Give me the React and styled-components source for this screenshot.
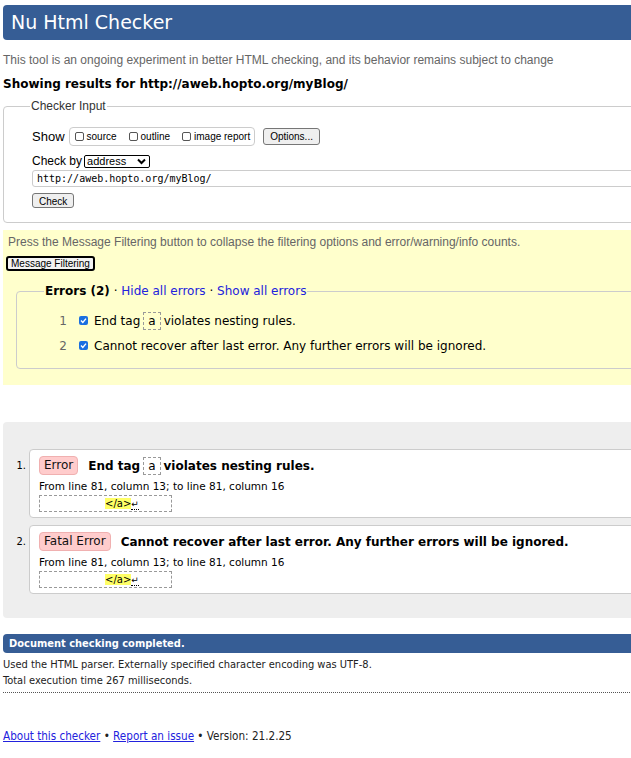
import React from "react";
import styled, { createGlobalStyle } from "styled-components";

const Global = createGlobalStyle`
  html, body { margin: 0; padding: 0; overflow: hidden; background: #fff; }
  body { font-family: "DejaVu Sans", sans-serif; color: #000; }
`;

const Page = styled.div`
  width: 720px;
  padding: 5px 0 0 3px;
  box-sizing: border-box;
`;

const Header = styled.h1`
  margin: 0;
  height: 35px;
  background: #365d95;
  color: #fff;
  border-radius: 4px;
  padding-left: 8px;
  font: 400 19px/35px "DejaVu Sans", sans-serif;
`;

const Intro = styled.p`
  margin: 12px 0 0;
  font: 12px/16px "Liberation Sans", Arial, sans-serif;
  color: #666;
`;

const ResultsFor = styled.h2`
  margin: 8px 0 0;
  font: 700 12px/16px "DejaVu Sans", sans-serif;
`;

const InputSet = styled.fieldset`
  margin: 7px 0 0;
  padding: 0 0 14px 28px;
  border: 1px solid #ccc;
  border-radius: 4px;
`;

const InputLegend = styled.legend`
  padding: 0 1px;
  margin-left: -2px;
  font: 12px/14px "Liberation Sans", Arial, sans-serif;
  color: #333;
`;

const Row = styled.div`
  display: flex;
  align-items: center;
  margin-top: ${(p) => p.$mt}px;
`;

const ShowLabel = styled.span`
  font: 13px/19px "Liberation Sans", Arial, sans-serif;
  margin-right: 4px;
`;

const OptionGroup = styled.span`
  display: inline-flex;
  align-items: center;
  height: 17px;
  border: 1px solid #ccc;
  border-radius: 4px;
  padding: 0 4px 0 5px;
  gap: 12px;
`;

const Opt = styled.label`
  display: inline-flex;
  align-items: center;
  gap: 3px;
  font: 10px/12px "Liberation Sans", Arial, sans-serif;
`;

const SmallBox = styled.span`
  width: 7px;
  height: 7px;
  border: 1px solid #555;
  border-radius: 2px;
  background: #fff;
`;

const NativeButton = styled.button`
  font: 10px/13px "Liberation Sans", Arial, sans-serif;
  color: #000;
  background: #efefef;
  border: 1px solid #767676;
  border-radius: 3px;
  padding: 1px 6px;
  height: ${(p) => p.$h}px;
  margin-left: ${(p) => p.$ml || 0}px;
`;

const CheckByLabel = styled.span`
  font: 12px/14px "Liberation Sans", Arial, sans-serif;
  margin-right: 2px;
`;

const SelectWrap = styled.span`
  position: relative;
  display: block;
  width: 66px;
  height: 13px;
`;

const Select = styled.select`
  display: block;
  appearance: none;
  width: 66px;
  height: 13px;
  box-sizing: border-box;
  border: 1px solid #000;
  border-radius: 2px;
  background: #fff;
  padding: 0 0 0 2px;
  margin: 0;
  font: 11px/11px "Liberation Sans", Arial, sans-serif;
  color: #000;
`;

const Chevron = styled.svg`
  position: absolute;
  right: 4px;
  top: 3px;
  pointer-events: none;
`;

const UrlInput = styled.input`
  display: block;
  margin-top: 2px;
  width: 100%;
  height: 17px;
  box-sizing: border-box;
  border: 1px solid #ccc;
  border-radius: 3px;
  padding: 0 4px;
  font: 10px/15px "DejaVu Sans Mono", monospace;
  color: #000;
`;

const Filters = styled.div`
  margin-top: 7px;
  background: #ffc;
  padding: 4px 0 16px 5px;
`;

const FilterNote = styled.p`
  margin: 0;
  font: 12px/16px "Liberation Sans", Arial, sans-serif;
  color: #666;
`;

const FilterButton = styled.button`
  display: block;
  margin: 6px 0 0 -2px;
  height: 15px;
  padding: 0 3px;
  border: 2px solid #000;
  border-radius: 3px;
  background: #f3f3f3;
  font: 10px/11px "Liberation Sans Narrow", "Liberation Sans", Arial, sans-serif;
  color: #000;
`;

const ErrorSet = styled.fieldset`
  margin: 12px 0 0 8px;
  padding: 9px 0 10px 0;
  border: 1px solid #ccc;
  border-radius: 4px;
`;

const ErrorLegend = styled.legend`
  margin-left: 27px;
  padding: 0 1px;
  font: 12px/16px "DejaVu Sans", sans-serif;
  color: #000;
  b { font-weight: 700; }
  a { color: #22d; text-decoration: none; }
`;

const FilterList = styled.ol`
  margin: 0;
  padding: 0;
  list-style: none;
`;

const FilterItem = styled.li`
  display: flex;
  align-items: center;
  height: 25px;
  font: 12px/16px "DejaVu Sans", sans-serif;
`;

const ItemNum = styled.span`
  width: 50px;
  text-align: right;
  color: #666;
  margin-right: 12px;
`;

const Tick = styled.span`
  width: 9px;
  height: 9px;
  border-radius: 2px;
  background: #1a6fe0;
  margin-right: 6px;
  display: inline-flex;
  align-items: center;
  justify-content: center;
`;

const Code = styled.code`
  display: inline-block;
  border: 1px dashed #999;
  padding: 0 4px;
  margin: 0 3px;
  font: 400 12px/16px "DejaVu Sans", sans-serif;
`;

const Results = styled.div`
  margin-top: 37px;
  background: #eee;
  border-radius: 4px;
  padding: 27px 0 24px 0;
`;

const ResultList = styled.ol`
  margin: 0;
  padding: 0 0 0 26px;
  display: flex;
  flex-direction: column;
  gap: 7px;
`;

const ResultItem = styled.li`
  background: #fff;
  border: 1px solid #ccc;
  border-radius: 4px;
  padding: 6px 0 5px 9px;
  font: 12px/16px "DejaVu Sans", sans-serif;
  &::marker {
    font: 11px "DejaVu Sans Condensed", "DejaVu Sans", sans-serif;
  }
`;

const Heading = styled.p`
  margin: 0;
  display: flex;
  align-items: center;
  font-weight: 700;
`;

const Badge = styled.span`
  display: inline-block;
  background: #fcc;
  border: 1px solid #f0b0b0;
  border-radius: 4px;
  padding: 0 4px;
  height: 17px;
  line-height: 17px;
  font-weight: 400;
  color: #111;
  margin-right: 10px;
`;

const Location = styled.p`
  margin: 3px 0 0;
  font: 10.5px/16px "DejaVu Sans", sans-serif;
`;

const Extract = styled.p`
  margin: 1px 0 0;
  width: 133px;
  height: 17px;
  box-sizing: border-box;
  border: 1px dashed #999;
  padding-left: 65px;
  font: 10px/15px "DejaVu Sans", sans-serif;
  white-space: nowrap;
  mark { background: #ff6; color: #000; }
`;

const Lf = styled.span`
  border-bottom: 1px dotted #000;
  font-size: 9px;
`;

const Done = styled.div`
  margin-top: 16px;
  height: 19px;
  background: #365d95;
  color: #fff;
  border-radius: 4px;
  padding-left: 6px;
  font: 700 11px/19px "DejaVu Sans Condensed", "DejaVu Sans", sans-serif;
`;

const Stats = styled.div`
  font: 11px/16px "DejaVu Sans Condensed", "DejaVu Sans", sans-serif;
  color: #222;
  padding-bottom: 3px;
  border-bottom: 1px dotted #555;
  margin-top: 4px;
`;

const Footer = styled.p`
  margin: 35px 0 0;
  font: 11.6px/16px "DejaVu Sans Condensed", "DejaVu Sans", sans-serif;
  color: #222;
  a { color: #22d; text-decoration: underline; }
`;

const CheckMark = () => (
  <svg width="7" height="7" viewBox="0 0 7 7">
    <path d="M1 3.6 L2.8 5.4 L6 1.6" fill="none" stroke="#fff" strokeWidth="1.4" />
  </svg>
);

const CodeExtract = () => (
  <Extract>
    <mark>&lt;/a&gt;</mark>
    <Lf>↵</Lf>
  </Extract>
);

export default function App() {
  return (
    <>
      <Global />
      <Page>
        <Header>Nu Html Checker</Header>
        <Intro>
          This tool is an ongoing experiment in better HTML checking, and its behavior remains subject to change
        </Intro>
        <ResultsFor>Showing results for http://aweb.hopto.org/myBlog/</ResultsFor>

        <InputSet>
          <InputLegend>Checker Input</InputLegend>
          <Row $mt={14}>
            <ShowLabel>Show</ShowLabel>
            <OptionGroup>
              <Opt><SmallBox />source</Opt>
              <Opt><SmallBox />outline</Opt>
              <Opt><SmallBox />image report</Opt>
            </OptionGroup>
            <NativeButton $h={17} $ml={8}>Options...</NativeButton>
          </Row>
          <Row $mt={8}>
            <CheckByLabel>Check by</CheckByLabel>
            <SelectWrap>
              <Select defaultValue="address">
                <option value="address">address</option>
              </Select>
              <Chevron width="9" height="7" viewBox="0 0 9 7">
                <path d="M1 1.5 L4.5 5 L8 1.5" fill="none" stroke="#000" strokeWidth="2" />
              </Chevron>
            </SelectWrap>
          </Row>
          <UrlInput readOnly value="http://aweb.hopto.org/myBlog/" />
          <Row $mt={6}>
            <NativeButton $h={15}>Check</NativeButton>
          </Row>
        </InputSet>

        <Filters>
          <FilterNote>
            Press the Message Filtering button to collapse the filtering options and error/warning/info counts.
          </FilterNote>
          <FilterButton>Message Filtering</FilterButton>
          <ErrorSet>
            <ErrorLegend>
              <b>Errors (2)</b> · <a href="#h">Hide all errors</a> · <a href="#s">Show all errors</a>
            </ErrorLegend>
            <FilterList>
              <FilterItem>
                <ItemNum>1</ItemNum>
                <Tick><CheckMark /></Tick>
                End tag<Code>a</Code>violates nesting rules.
              </FilterItem>
              <FilterItem>
                <ItemNum>2</ItemNum>
                <Tick><CheckMark /></Tick>
                Cannot recover after last error. Any further errors will be ignored.
              </FilterItem>
            </FilterList>
          </ErrorSet>
        </Filters>

        <Results>
          <ResultList>
            <ResultItem>
              <Heading>
                <Badge>Error</Badge>
                End tag<Code>a</Code>violates nesting rules.
              </Heading>
              <Location>From line 81, column 13; to line 81, column 16</Location>
              <CodeExtract />
            </ResultItem>
            <ResultItem>
              <Heading>
                <Badge>Fatal Error</Badge>
                Cannot recover after last error. Any further errors will be ignored.
              </Heading>
              <Location>From line 81, column 13; to line 81, column 16</Location>
              <CodeExtract />
            </ResultItem>
          </ResultList>
        </Results>

        <Done>Document checking completed.</Done>
        <Stats>
          Used the HTML parser. Externally specified character encoding was UTF-8.
          <br />
          Total execution time 267 milliseconds.
        </Stats>
        <Footer>
          <a href="#about">About this checker</a> • <a href="#issue">Report an issue</a> • Version: 21.2.25
        </Footer>
      </Page>
    </>
  );
}
